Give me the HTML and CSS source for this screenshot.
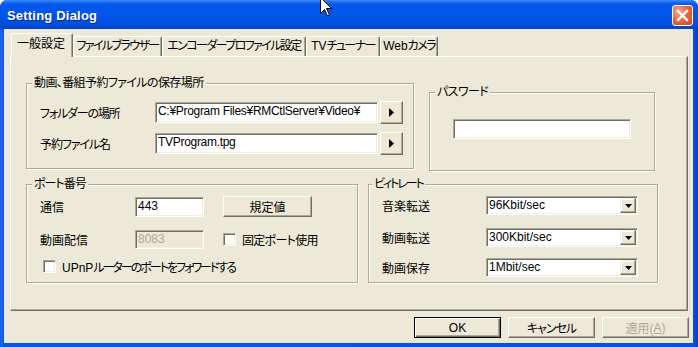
FILE: index.html
```html
<!DOCTYPE html>
<html lang="ja">
<head>
<meta charset="utf-8">
<title>Setting Dialog</title>
<link rel="stylesheet" href="styles.css">
</head>
<body>
<div class="window">
  <div class="titlebar">
    <span class="title">Setting Dialog</span>
    <span class="close"><svg width="13" height="13" viewBox="0 0 13 13"><path d="M2 2 L11 11 M11 2 L2 11" stroke="#fff" stroke-width="2.4" stroke-linecap="square"/></svg></span>
  </div>
  <div class="client">
    <div class="tabs">
      <div class="tab active t1">一般設定</div>
      <div class="tab t2">ファイルブラウザー</div>
      <div class="tab t3">エンコーダープロファイル設定</div>
      <div class="tab t4"><span class="lat">TV</span>チューナー</div>
      <div class="tab t5"><span class="lat">Web</span>カメラ</div>
    </div>
    <div class="panel">
      <div class="toprow">
        <div class="grp g-save">
          <div class="cap c-save">動画、番組予約ファイルの保存場所</div>
          <div class="frow r1">
            <span class="lbl ls12">フォルダーの場所</span>
            <div class="edit path">C:¥Program Files¥RMCtlServer¥Video¥</div>
            <div class="btn arrow"><svg width="6" height="9" viewBox="0 0 6 9"><path d="M0 0 L5 4.5 L0 9 Z" fill="#000"/></svg></div>
          </div>
          <div class="frow r2">
            <span class="lbl ls11">予約ファイル名</span>
            <div class="edit path">TVProgram.tpg</div>
            <div class="btn arrow"><svg width="6" height="9" viewBox="0 0 6 9"><path d="M0 0 L5 4.5 L0 9 Z" fill="#000"/></svg></div>
          </div>
        </div>
        <div class="grp g-pass">
          <div class="cap c-pass">パスワード</div>
          <div class="edit pw"></div>
        </div>
      </div>
      <div class="botrow">
        <div class="grp g-port">
          <div class="cap c-port">ポート番号</div>
          <div class="prow p1">
            <span class="plbl">通信</span>
            <div class="edit port">443</div>
            <div class="btn defbtn">規定値</div>
          </div>
          <div class="prow p2">
            <span class="plbl">動画配信</span>
            <div class="edit port disabled">8083</div>
            <span class="chk"></span><span class="chklbl ls07">固定ポート使用</span>
          </div>
          <div class="prow p3">
            <span class="chk"></span><span class="chklbl ls20"><span class="lat">UPnP</span>ルーターのポートをフォワードする</span>
          </div>
        </div>
        <div class="grp g-rate">
          <div class="cap c-rate">ビィトレート</div>
          <div class="rrow q1">
            <span class="rlbl">音楽転送</span>
            <div class="combo"><span class="ctext">96Kbit/sec</span><span class="cbtn"><svg width="7" height="4" viewBox="0 0 7 4"><path d="M0 0 H7 L3.5 4 Z" fill="#000"/></svg></span></div>
          </div>
          <div class="rrow q2">
            <span class="rlbl">動画転送</span>
            <div class="combo"><span class="ctext">300Kbit/sec</span><span class="cbtn"><svg width="7" height="4" viewBox="0 0 7 4"><path d="M0 0 H7 L3.5 4 Z" fill="#000"/></svg></span></div>
          </div>
          <div class="rrow q3">
            <span class="rlbl">動画保存</span>
            <div class="combo"><span class="ctext">1Mbit/sec</span><span class="cbtn"><svg width="7" height="4" viewBox="0 0 7 4"><path d="M0 0 H7 L3.5 4 Z" fill="#000"/></svg></span></div>
          </div>
        </div>
      </div>
    </div>
    <div class="buttons">
      <div class="btn dlg default">OK</div>
      <div class="btn dlg ls10">キャンセル</div>
      <div class="btn dlg disabledbtn">適用(<u>A</u>)</div>
    </div>
  </div>
  <svg class="cursor" width="13" height="20" viewBox="0 0 13 20"><path d="M0.5 0.5 L0.5 16.5 L4.5 12.5 L7.5 19 L9.5 18 L6.5 11.5 L11.5 11.5 Z" fill="#fff" stroke="#000" stroke-width="1"/></svg>
</div>
</body>
</html>
```
FILE: styles.css
```css
* { box-sizing: border-box; }
html, body { margin: 0; padding: 0; }
body {
  width: 698px; height: 347px; overflow: hidden; background: #fff;
  font-family: "Liberation Sans", "Noto Sans CJK JP", sans-serif;
  font-size: 12px; font-feature-settings: "palt"; color: #000;
}
.window {
  position: relative; width: 698px; height: 347px;
  background: linear-gradient(to right, #0A3FD2 0, #2A72F0 1px, #0C55E4 3px, #0A4FDF 694px, #0842D2 697px);
  border-radius: 7px 7px 0 0; overflow: hidden;
}
.titlebar {
  height: 29px; display: flex; align-items: center; justify-content: space-between;
  padding: 0 5px 0 7px;
  background: linear-gradient(180deg, #3D8EF8 0px, #1F6CF3 2px, #0659EE 4px, #0256EA 10px, #0154E6 18px, #0150DF 24px, #0346CB 27px, #0A3FD0 29px);
}
.title {
  font-family: "Liberation Sans", sans-serif; font-weight: bold; font-size: 13px;
  color: #fff; text-shadow: 1px 1px 0 #0B2A9A; letter-spacing: 0.2px; margin-top: 1px;
}
.close {
  width: 21px; height: 21px; border: 1px solid #fff; border-radius: 3px;
  background: radial-gradient(circle at 30% 30%, #F3A68C 0, #E66A44 45%, #D3421C 100%);
  display: flex; align-items: center; justify-content: center; margin-top: 2px;
}
.client {
  height: 314px; margin: 0 5px 0 4px; background: #ECE9D8; padding: 4px 0 0 6px;
}
.lat { letter-spacing: 0; }
.tabs { display: flex; align-items: flex-end; height: 23px; padding-left: 1px; }
.tab {
  height: 20px; line-height: 18px; text-align: center; white-space: nowrap; padding: 0 2px;
  letter-spacing: -1.6px;
  border-left: 1px solid #fff; border-top: 1px solid #fff; border-right: 1px solid #716F64;
  box-shadow: inset -1px 0 0 #ACA899; border-radius: 2px 2px 0 0; background: #ECE9D8;
}
.tab.active {
  height: 24px; margin-bottom: -1px; position: relative; z-index: 1; line-height: 21px;
  letter-spacing: 0; padding: 0 2px 0 0;
}
.t1 { width: 62px; }
.t2 { width: 89px; }
.t3 { width: 144px; }
.t4 { width: 74px; }
.t5 { width: 58px; }
.panel {
  width: 678px; height: 255px; background: #ECE9D8;
  border-left: 1px solid #fff; border-top: 1px solid #fff;
  border-right: 1px solid #716F64; border-bottom: 1px solid #716F64;
  box-shadow: inset -1px -1px 0 #ACA899;
  padding: 26px 0 0 15px;
}
.toprow, .botrow { display: flex; align-items: flex-start; }
.grp {
  border: 1px solid #ACA899; box-shadow: inset 1px 1px 0 #fff, 1px 1px 0 #fff;
}
.cap {
  width: fit-content; height: 14px; line-height: 14px; margin-top: -8px; padding: 0 2px;
  background: #ECE9D8; white-space: nowrap;
}
.c-save { margin-left: -8px; letter-spacing: -0.6px; }
.c-pass { margin-left: -18px; letter-spacing: -0.6px; }
.c-port { margin-left: -8px; letter-spacing: -1px; }
.c-rate { margin-left: -10px; letter-spacing: -2px; }
.ls07 { letter-spacing: -0.7px; }
.ls10 { letter-spacing: -1px; }
.ls11 { letter-spacing: -1.1px; }
.ls12 { letter-spacing: -1.2px; }
.ls20 { letter-spacing: -2px; }
.g-save { width: 388px; height: 86px; padding-left: 13px; }
.g-pass { width: 226px; height: 79px; margin: 9px 0 0 15px; padding-left: 23px; }
.botrow { margin-top: 13px; }
.g-port { width: 332px; height: 99px; padding-left: 13px; }
.g-rate { width: 290px; height: 99px; margin-left: 10px; padding-left: 13px; }

.frow { display: flex; align-items: center; height: 23px; }
.r1 { margin-top: 11px; }
.r2 { margin-top: 8px; }
.lbl { width: 115px; white-space: nowrap; flex: none; }
.edit {
  background: #fff; height: 21px; line-height: 17px; padding-left: 2px; white-space: nowrap; overflow: hidden;
  border: 1px solid; border-color: #ACA899 #fff #fff #ACA899;
  box-shadow: inset 1px 1px 0 #716F64, inset -1px -1px 0 #F1EFE2;
}
.path { width: 223px; letter-spacing: -0.3px; }
.pw { width: 178px; height: 20px; margin-top: 20px; }
.btn {
  display: flex; align-items: center; justify-content: center; background: #ECE9D8;
  border: 1px solid; border-color: #fff #716F64 #716F64 #fff;
  box-shadow: inset -1px -1px 0 #ACA899; white-space: nowrap;
}
.arrow { width: 23px; height: 23px; margin-left: 2px; padding-left: 1px; }

.prow { display: flex; align-items: center; }
.p1 { margin-top: 5px; height: 21px; }
.p2 { margin-top: 12px; height: 20px; }
.p3 { margin-top: 8px; height: 18px; padding-left: 3px; }
.plbl { width: 95px; white-space: nowrap; }
.port { width: 69px; height: 20px; }
.port.disabled { background: #ECE9D8; color: #ACA899; height: 19px; }
.defbtn { width: 89px; height: 21px; margin-left: 19px; }
.chk {
  width: 13px; height: 13px; background: #fff; flex: none;
  border: 1px solid; border-color: #ACA899 #fff #fff #ACA899;
  box-shadow: inset 1px 1px 0 #716F64, inset -1px -1px 0 #F1EFE2;
}
.p2 .chk { margin-left: 19px; }
.chklbl { margin-left: 6px; white-space: nowrap; }

.rrow { display: flex; align-items: center; height: 19px; }
.q1 { margin-top: 5px; }
.q2 { margin-top: 13px; }
.q3 { margin-top: 11px; }
.rlbl { width: 104px; white-space: nowrap; }
.combo {
  width: 152px; height: 19px; background: #fff; display: flex; align-items: center; justify-content: space-between;
  border: 1px solid; border-color: #ACA899 #fff #fff #ACA899;
  box-shadow: inset 1px 1px 0 #716F64, inset -1px -1px 0 #F1EFE2; padding: 1px 1px 1px 2px;
}
.ctext { line-height: 15px; }
.cbtn {
  width: 16px; height: 15px; display: flex; align-items: center; justify-content: center; background: #ECE9D8;
  border: 1px solid; border-color: #F1EFE2 #716F64 #716F64 #F1EFE2;
  box-shadow: inset -1px -1px 0 #ACA899, inset 1px 1px 0 #fff;
}

.buttons { display: flex; justify-content: flex-end; gap: 7px; margin-top: 6px; padding-right: 4px; }
.dlg { width: 87px; height: 21px; }
.default { border: 1px solid #000; box-shadow: inset 1px 1px 0 #fff, inset -1px -1px 0 #716F64, inset -2px -2px 0 #ACA899; }
.disabledbtn { color: #ACA899; }
.disabledbtn u { text-decoration: underline; }
.cursor { position: absolute; left: 320px; top: -3px; }
```
